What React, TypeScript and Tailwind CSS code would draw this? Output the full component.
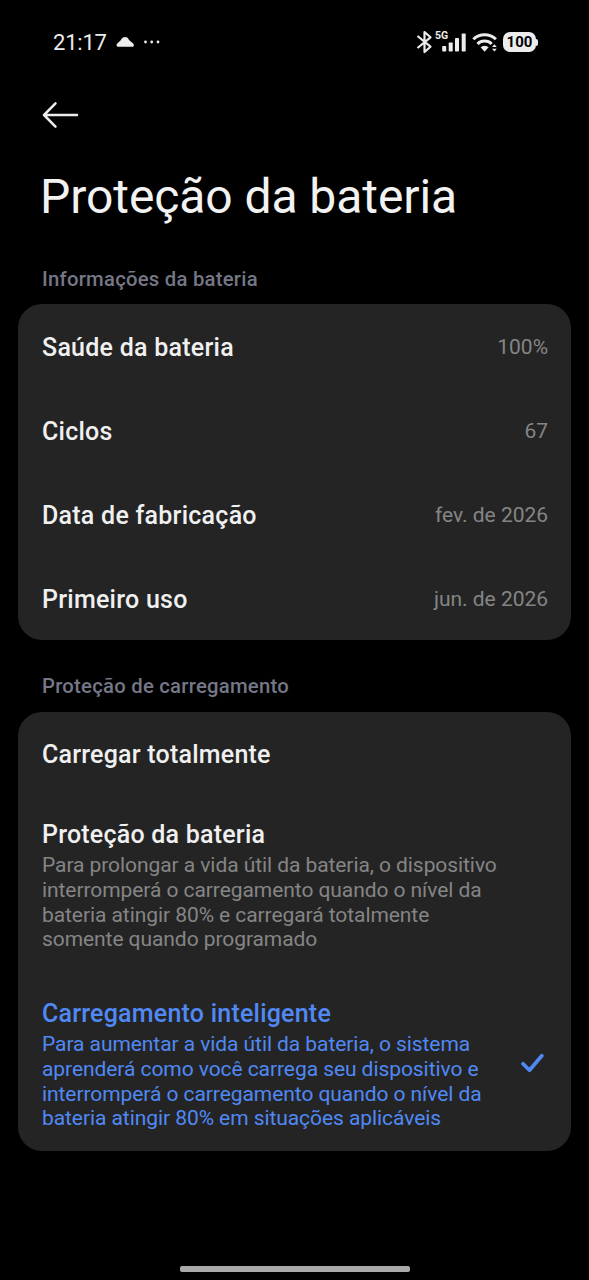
import clsx from 'clsx';

interface InfoRow {
  label: string;
  value: string;
}

interface ChargeMode {
  id: string;
  title: string;
  lines: string[];
}

const infoRows: InfoRow[] = [
  { label: 'Saúde da bateria', value: '100%' },
  { label: 'Ciclos', value: '67' },
  { label: 'Data de fabricação', value: 'fev. de 2026' },
  { label: 'Primeiro uso', value: 'jun. de 2026' },
];

const chargeModes: ChargeMode[] = [
  { id: 'full', title: 'Carregar totalmente', lines: [] },
  {
    id: 'protect',
    title: 'Proteção da bateria',
    lines: [
      'Para prolongar a vida útil da bateria, o dispositivo',
      'interromperá o carregamento quando o nível da',
      'bateria atingir 80% e carregará totalmente',
      'somente quando programado',
    ],
  },
  {
    id: 'smart',
    title: 'Carregamento inteligente',
    lines: [
      'Para aumentar a vida útil da bateria, o sistema',
      'aprenderá como você carrega seu dispositivo e',
      'interromperá o carregamento quando o nível da',
      'bateria atingir 80% em situações aplicáveis',
    ],
  },
];

function StatusBar() {
  return (
    <header className="flex h-[84px] items-center justify-between pr-[51px] pl-[53px] text-[#ececec]">
      <div className="flex items-center">
        <span className="w-[54px] pt-[2px] text-[22px] leading-[26px] tracking-[-0.2px] whitespace-nowrap">21:17</span>
        {/* Nuvem */}
        <svg className="ml-[9px]" width="19" height="12" viewBox="0 0 19 12" fill="currentColor">
          <path d="M2.500 10.800C.5 10.800-.1 8.600 1.300 7.400L4.500 4.600C5.600 2.200 7.200 1 9 1c2.100 0 3.400 1.100 4 3l3.600 2.900c2 1.600 1.500 3.900-.6 3.900z" />
        </svg>
        <svg className="ml-[8px]" width="18" height="4" viewBox="0 0 18 4" fill="currentColor">
          <circle cx="2.500" cy="2" r="1.400" />
          <circle cx="8.700" cy="2" r="1.400" />
          <circle cx="15" cy="2" r="1.400" />
        </svg>
      </div>

      <div className="flex items-center">
        {/* Bluetooth */}
        <svg width="18" height="24" viewBox="0 0 18 24" fill="none" stroke="currentColor" strokeWidth="2.200" strokeLinejoin="round">
          <path d="M1.500 6L14.500 16.700 8.500 22V2L14.500 7.300 1.500 18" />
        </svg>
        {/* Sinal 5G */}
        <svg className="ml-[1px]" width="32" height="24" viewBox="0 0 32 24" fill="currentColor">
          <text x="0" y="9" fontSize="10.500" fontWeight="700" fontFamily="Roboto, sans-serif">5G</text>
          <rect x="7.200" y="16" width="4" height="5.500" rx="0.800" />
          <rect x="13.700" y="12.500" width="4" height="9" rx="0.800" />
          <rect x="20" y="8" width="4" height="13.500" rx="0.800" />
          <rect x="26.700" y="3.500" width="4" height="18" rx="0.800" />
        </svg>
        {/* Wi-Fi */}
        <svg className="ml-[5.500px]" width="27" height="24" viewBox="0 0 27 24" fill="none" stroke="currentColor" strokeWidth="3">
          <path d="M1.300 9.300a16.200 16.200 0 0122.600 0" />
          <path d="M5.500 14a10.200 10.200 0 0114.200 0" />
          <path d="M8.600 17.200a6 6 0 018 0L12.600 21.700z" fill="currentColor" stroke="none" />
          <path d="M20 17l2.400-2.800 2.400 2.800zM20 18.800l2.400 2.800 2.400-2.800z" fill="currentColor" stroke="none" />
        </svg>
        {/* Bateria */}
        <div className="ml-[4px] flex items-center">
          <div className="flex h-[20px] w-[33px] items-center justify-center rounded-[7px] bg-[#ececec] text-[15px] leading-none font-bold text-black">
            100
          </div>
          <div className="h-[7px] w-[2px] rounded-r-full bg-[#ececec]" />
        </div>
      </div>
    </header>
  );
}

function SectionTitle({ children }: { children: string }) {
  return (
    <h2 className="pl-[42px] text-[20.300px] leading-[24px] font-medium tracking-[0.24px] whitespace-nowrap text-[#757786]">
      {children}
    </h2>
  );
}

function CheckIcon() {
  return (
    <svg className="mb-[4px]" width="24" height="20" viewBox="0 0 24 20" fill="none" stroke="#5089f4" strokeWidth="3.700" strokeLinecap="round" strokeLinejoin="round">
      <path d="M3 10.800L9.500 17.300 21.800 2.700" />
    </svg>
  );
}

export default function App() {
  const selected = 'smart';

  return (
    <div className="flex h-[1280px] w-[589px] flex-col overflow-hidden bg-black font-['Roboto',sans-serif]">
      <StatusBar />

      {/* Voltar */}
      <button className="ml-[42px] flex h-[62px] w-[40px] items-center" aria-label="Voltar">
        <svg width="37" height="28" viewBox="0 0 37 28" fill="none" stroke="#ececec" strokeWidth="2.500" strokeLinecap="round" strokeLinejoin="round">
          <path d="M35 14H2M13.500 2.300L2 14l11.500 11.700" />
        </svg>
      </button>

      <h1 className="mt-[22px] pl-[40px] text-[48px] leading-[58px] tracking-[-0.07px] whitespace-nowrap text-[#f2f2f2]">
        Proteção da bateria
      </h1>

      <div className="mt-[41px]">
        <SectionTitle>Informações da bateria</SectionTitle>
      </div>
      <section className="mx-[18px] mt-[13px] rounded-[24px] bg-[#242424]">
        {infoRows.map((row) => (
          <div key={row.label} className="flex h-[84px] items-center justify-between pt-[4px] pr-[23px] pl-[24px]">
            <span className="text-[25px] leading-[30px] font-medium tracking-[0.25px] text-[#f0f0f0]">{row.label}</span>
            <span className="pb-[2px] text-[21px] leading-[30px] tracking-[-0.03px] text-[#858585]">{row.value}</span>
          </div>
        ))}
      </section>

      <div className="mt-[34px]">
        <SectionTitle>Proteção de carregamento</SectionTitle>
      </div>
      <section className="mx-[18px] mt-[14px] h-[439px] rounded-[24px] bg-[#242424]">
        {chargeModes.map((mode) => {
          const active = mode.id === selected;
          return (
            <div
              key={mode.id}
              className={clsx(
                'flex items-center justify-between pr-[27px] pl-[24px]',
                mode.lines.length ? 'h-[179px] pt-[1px]' : 'h-[84px] pt-[2px]',
              )}
            >
              <div className="whitespace-nowrap">
                <h3 className={clsx('text-[25px] leading-[30px] font-medium tracking-[0.22px]', active ? 'text-[#5089f4]' : 'text-[#f0f0f0]')}>
                  {mode.title}
                </h3>
                {mode.lines.length > 0 && (
                  <p className={clsx('mt-[3px] text-[21px] leading-[24.700px] tracking-[-0.07px]', active ? 'text-[#5089f4]' : 'text-[#858585]')}>
                    {mode.lines.map((line) => (
                      <span key={line} className="block">{line}</span>
                    ))}
                  </p>
                )}
              </div>
              {active && <CheckIcon />}
            </div>
          );
        })}
      </section>

      {/* Barra de gestos */}
      <div className="mt-auto mb-[8px] ml-[180px] h-[6px] w-[230px] rounded-[2px] bg-[#a9a9a9]" />
    </div>
  );
}
